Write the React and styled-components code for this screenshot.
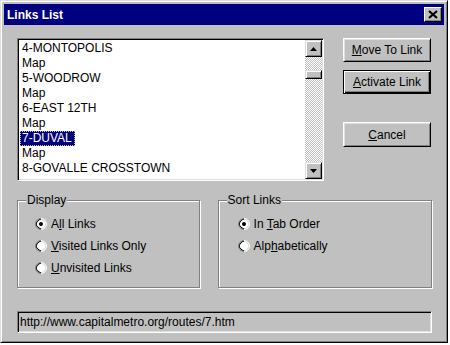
import styled, { createGlobalStyle } from 'styled-components';

const Global = createGlobalStyle`
  body {
    margin: 0;
    background: #fff;
    font-family: "Liberation Sans", Arial, sans-serif;
    font-size: 12px;
    color: #000;
  }
`;

const Dialog = styled.div`
  width: 448px;
  height: 343px;
  box-sizing: border-box;
  background: #c0c0c0;
  border: 1px solid;
  border-color: #dfdfdf #000 #000 #dfdfdf;
  box-shadow: inset 1px 1px #fff, inset -1px -1px #808080;
  padding: 3px;
  display: flex;
  flex-direction: column;
`;

const TitleBar = styled.div`
  height: 21px;
  background: #000080;
  color: #fff;
  font-weight: bold;
  font-size: 12px;
  display: flex;
  align-items: center;
  justify-content: space-between;
  padding-left: 3px;
`;

const CloseBox = styled.div`
  width: 18px;
  height: 15px;
  box-sizing: border-box;
  margin-right: 2px;
  background: #c0c0c0;
  border: 1px solid;
  border-color: #fff #000 #000 #fff;
  box-shadow: inset -1px -1px #808080;
  display: flex;
  align-items: center;
  justify-content: center;
`;

const Body = styled.div`
  padding: 13px 12px 0 13px;
  display: flex;
  flex-direction: column;
`;

const TopRow = styled.div`
  display: flex;
  gap: 19px;
`;

const ListBox = styled.div`
  width: 307px;
  height: 143px;
  box-sizing: border-box;
  background: #fff;
  border: 1px solid;
  border-color: #808080 #fff #fff #808080;
  box-shadow: inset 1px 1px #000, inset -1px -1px #dfdfdf;
  padding: 1px;
  display: flex;
`;

const Items = styled.ul`
  list-style: none;
  margin: 0;
  padding: 1px 0 0;
  flex: 1;
`;

const Item = styled.li`
  height: 15px;
  line-height: 15px;
  padding-left: 1px;
  white-space: nowrap;
`;

const ItemText = styled.span`
  display: inline-block;
  padding: 0 3px 0 2px;
  height: 15px;
  box-sizing: border-box;
  background: ${(p) => (p.$selected ? '#000080' : 'transparent')};
  color: ${(p) => (p.$selected ? '#fff' : '#000')};
  outline: ${(p) => (p.$selected ? '1px dotted #c8c880' : 'none')};
  outline-offset: -1px;
`;

const ScrollBar = styled.div`
  width: 17px;
  display: flex;
  flex-direction: column;
  background: repeating-conic-gradient(#fff 0 25%, #c0c0c0 0 50%) 0 0 / 2px 2px;
`;

const bevel = `
  box-sizing: border-box;
  background: #c0c0c0;
  border: 1px solid;
  border-color: #dfdfdf #000 #000 #dfdfdf;
  box-shadow: inset 1px 1px #fff, inset -1px -1px #808080;
`;

const ArrowButton = styled.div`
  ${bevel}
  width: 17px;
  height: 17px;
  display: flex;
  align-items: center;
  justify-content: center;
`;

const Track = styled.div`
  flex: 1;
`;

const Thumb = styled.div`
  ${bevel}
  width: 17px;
  height: 9px;
  margin-top: 13px;
`;

const ButtonColumn = styled.div`
  width: 88px;
  display: flex;
  flex-direction: column;
`;

const Button = styled.div`
  height: ${(p) => (p.$tall ? 25 : 24)}px;
  margin-top: ${(p) => p.$gap || 0}px;
  box-sizing: border-box;
  background: #c0c0c0;
  border: 1px solid;
  border-color: ${(p) => (p.$default ? '#000' : '#fff #000 #000 #fff')};
  box-shadow: ${(p) =>
    p.$default
      ? 'inset 1px 1px #fff, inset -1px -1px #000, inset -2px -2px #808080'
      : 'inset 1px 1px #dfdfdf, inset -1px -1px #808080'};
  display: flex;
  align-items: center;
  justify-content: center;
  font-size: 12px;
`;

const Key = styled.span`
  text-decoration: underline;
  text-underline-offset: 1px;
`;

const GroupRow = styled.div`
  display: flex;
  gap: 18px;
  margin-top: 19px;
`;

const Group = styled.div`
  position: relative;
  width: ${(p) => p.$width}px;
  height: 88px;
  box-sizing: border-box;
  border: 1px solid #808080;
  box-shadow: inset 1px 1px #fff, 1px 1px #fff;
  padding: 12px 0 0 ${(p) => p.$inset}px;
`;

const Legend = styled.span`
  position: absolute;
  top: -8px;
  left: 8px;
  padding: 0 1px;
  background: #c0c0c0;
  line-height: 15px;
`;

const RadioRow = styled.div`
  height: 22px;
  display: flex;
  align-items: center;
  gap: 4px;
`;

const RadioOuter = styled.div`
  width: 12px;
  height: 12px;
  box-sizing: border-box;
  border-radius: 50%;
  border: 1px solid;
  border-color: #808080 #fff #fff #808080;
  transform: rotate(-45deg);
  flex: none;
`;

const RadioInner = styled.div`
  width: 10px;
  height: 10px;
  box-sizing: border-box;
  border-radius: 50%;
  border: 1px solid;
  border-color: #000 #dfdfdf #dfdfdf #000;
  background: #fff;
  display: flex;
  align-items: center;
  justify-content: center;
`;

const Dot = styled.div`
  width: 4px;
  height: 4px;
  border-radius: 50%;
  background: #000;
`;

const StatusField = styled.div`
  margin-top: 23px;
  width: 415px;
  height: 22px;
  box-sizing: border-box;
  border: 1px solid;
  border-color: #808080 #fff #fff #808080;
  box-shadow: inset 1px 1px #000, inset -1px -1px #dfdfdf;
  padding-left: 2px;
  display: flex;
  align-items: center;
`;

function Radio({ checked, children }) {
  return (
    <RadioRow>
      <RadioOuter>
        <RadioInner>{checked && <Dot />}</RadioInner>
      </RadioOuter>
      <span>{children}</span>
    </RadioRow>
  );
}

function Arrow({ down }) {
  return (
    <svg width="7" height="4" viewBox="0 0 7 4">
      {down ? <path d="M0 0h7L3.5 4z" fill="#000" /> : <path d="M3.5 0L7 4H0z" fill="#000" />}
    </svg>
  );
}

const links = [
  '4-MONTOPOLIS',
  'Map',
  '5-WOODROW',
  'Map',
  '6-EAST 12TH',
  'Map',
  '7-DUVAL',
  'Map',
  '8-GOVALLE CROSSTOWN',
];

export default function App() {
  return (
    <>
      <Global />
      <Dialog>
        <TitleBar>
          <span>Links List</span>
          <CloseBox>
            <svg width="10" height="9" viewBox="0 0 10 9">
              <path d="M1 1l8 7M9 1L1 8" stroke="#000" strokeWidth="2.2" />
            </svg>
          </CloseBox>
        </TitleBar>
        <Body>
          <TopRow>
            <ListBox>
              <Items>
                {links.map((name, i) => (
                  <Item key={i}>
                    <ItemText $selected={i === 6}>{name}</ItemText>
                  </Item>
                ))}
              </Items>
              <ScrollBar>
                <ArrowButton><Arrow /></ArrowButton>
                <Track><Thumb /></Track>
                <ArrowButton><Arrow down /></ArrowButton>
              </ScrollBar>
            </ListBox>
            <ButtonColumn>
              <Button><span><Key>M</Key>ove To Link</span></Button>
              <Button $default $gap={8}><span><Key>A</Key>ctivate Link</span></Button>
              <Button $tall $gap={28}><span><Key>C</Key>ancel</span></Button>
            </ButtonColumn>
          </TopRow>
          <GroupRow>
            <Group $width={183} $inset={17}>
              <Legend>Display</Legend>
              <Radio checked>A<Key>l</Key>l Links</Radio>
              <Radio><Key>V</Key>isited Links Only</Radio>
              <Radio><Key>U</Key>nvisited Links</Radio>
            </Group>
            <Group $width={215} $inset={19}>
              <Legend>Sort Links</Legend>
              <Radio checked>In <Key>T</Key>ab Order</Radio>
              <Radio>Alp<Key>h</Key>abetically</Radio>
            </Group>
          </GroupRow>
          <StatusField>http://www.capitalmetro.org/routes/7.htm</StatusField>
        </Body>
      </Dialog>
    </>
  );
}
